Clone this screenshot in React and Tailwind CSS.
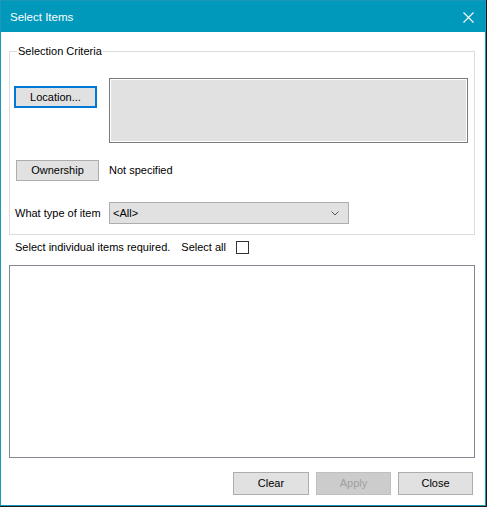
import React from 'react';

const font = { fontFamily: '"Liberation Sans", Arial, sans-serif' };

const Button = ({ children, className = '', disabled = false }) => (
  <button
    className={`flex items-center justify-center text-[11px] leading-none ${
      disabled
        ? 'bg-[#cccccc] border border-[#bfbfbf] text-[#a0a0a0]'
        : 'bg-[#e1e1e1] border border-[#adadad] text-black'
    } ${className}`}
  >
    {children}
  </button>
);

const App = () => {
  return (
    <div className="w-[487px] h-[507px] bg-[#1b1b1b] text-black" style={font}>
      <div className="w-[486px] h-[506px] border border-[#1a97b9] bg-white flex flex-col">
        {/* Title bar */}
        <div className="h-[31px] bg-[#0099bc] flex items-center justify-between pl-[9px] pr-[11px] shrink-0">
          <span className="text-white text-[11.5px] mt-[2px]">Select Items</span>
          <svg width="11" height="11" viewBox="0 0 11 11" className="mt-[2px]">
            <path d="M0.5 0.5 L10.5 10.5 M10.5 0.5 L0.5 10.5" stroke="white" strokeWidth="1.1" fill="none" />
          </svg>
        </div>

        {/* Selection Criteria group */}
        <div className="relative mt-[19px] ml-[8px] w-[466px] h-[184px] border border-[#dcdcdc] shrink-0">
          <span className="absolute -top-[8px] left-[7px] bg-white px-[1px] text-[11px] leading-[14px]">
            Selection Criteria
          </span>

          <div className="flex items-start mt-[26px]">
            <Button className="ml-[4px] mt-[8px] w-[83px] h-[22px] !border-2 !border-[#0078d7]">Location...</Button>
            <div className="ml-[12px] w-[359px] h-[65px] border border-[#7a7a7a] bg-[#e1e1e1] shadow-[inset_0_0_0_1px_#ffffff]" />
          </div>

          <div className="flex items-center mt-[17px]">
            <Button className="ml-[6px] w-[83px] h-[21px]">Ownership</Button>
            <span className="ml-[10px] text-[11px]">Not specified</span>
          </div>

          <div className="flex items-center mt-[21px]">
            <span className="ml-[5px] w-[94px] text-[11px]">What type of item</span>
            <div className="w-[240px] h-[22px] border border-[#adadad] bg-[#e1e1e1] flex items-center justify-between pl-[3px] pr-[9px]">
              <span className="text-[11px]">&lt;All&gt;</span>
              <svg width="8" height="5" viewBox="0 0 8 5">
                <path d="M0.5 0.5 L4 4 L7.5 0.5" stroke="#555555" strokeWidth="1" fill="none" />
              </svg>
            </div>
          </div>
        </div>

        {/* Select individual items */}
        <div className="flex items-center h-[14px] mt-[5px] ml-[14px] shrink-0">
          <span className="text-[11px]">Select individual items required.</span>
          <span className="ml-[11px] text-[11px]">Select all</span>
          <div className="ml-[10px] w-[13px] h-[13px] border border-[#333333] bg-white" />
        </div>

        {/* List */}
        <div className="mt-[11px] ml-[8px] w-[466px] h-[193px] border border-[#828790] bg-white shrink-0" />

        {/* Footer buttons */}
        <div className="flex mt-[14px] ml-[232px] gap-[7px] shrink-0">
          <Button className="w-[76px] h-[23px]">Clear</Button>
          <Button className="w-[75px] h-[23px]" disabled>Apply</Button>
          <Button className="w-[75px] h-[23px]">Close</Button>
        </div>
      </div>
    </div>
  );
};

export default App;
